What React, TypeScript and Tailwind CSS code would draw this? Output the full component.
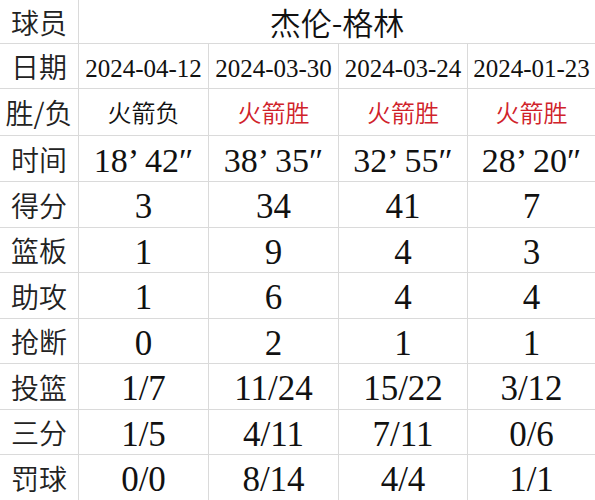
const games = [
  { date: '2024-04-12', result: '火箭负', win: false, time: '18’ 42″' },
  { date: '2024-03-30', result: '火箭胜', win: true, time: '38’ 35″' },
  { date: '2024-03-24', result: '火箭胜', win: true, time: '32’ 55″' },
  { date: '2024-01-23', result: '火箭胜', win: true, time: '28’ 20″' },
];

const stats: { label: string; values: string[] }[] = [
  { label: '得分', values: ['3', '34', '41', '7'] },
  { label: '篮板', values: ['1', '9', '4', '3'] },
  { label: '助攻', values: ['1', '6', '4', '4'] },
  { label: '抢断', values: ['0', '2', '1', '1'] },
  { label: '投篮', values: ['1/7', '11/24', '15/22', '3/12'] },
  { label: '三分', values: ['1/5', '4/11', '7/11', '0/6'] },
  { label: '罚球', values: ['0/0', '8/14', '4/4', '1/1'] },
];

const cjk = "font-['Noto_Sans_CJK_SC','Noto_Sans',sans-serif] font-[350]";
const serif = "font-['Liberation_Serif','Noto_Serif_CJK_SC',serif]";

const Label = ({ children }: { children: React.ReactNode }) => (
  <div className={`bg-white flex items-center justify-center leading-none text-[28px] text-[#222] ${cjk}`}>
    {children}
  </div>
);

const Cell = ({ children, className = '' }: { children: React.ReactNode; className?: string }) => (
  <div className={`bg-white flex items-center justify-center leading-none text-[#111] ${className}`}>
    {children}
  </div>
);

export default function App() {
  return (
    <div className="w-[595px] h-[500px] bg-white overflow-hidden">
      <div className="grid grid-cols-[78px_129px_129px_128px_127px] grid-rows-[43px_44px_46px_45px_45px_44px_45px_44px_45px_44px_45px] gap-px bg-[#dadada] w-[595px] h-[500px]">
        <Label>球员</Label>
        <div
          className={`col-span-4 bg-white flex items-center justify-center leading-none text-[31px] text-[#111] ${cjk}`}
        >
          杰伦-格林
        </div>

        <Label>日期</Label>
        {games.map((g) => (
          <Cell key={g.date} className={`text-[25px] pt-1 ${serif}`}>
            {g.date}
          </Cell>
        ))}

        <Label>胜/负</Label>
        {games.map((g) => (
          <Cell
            key={g.date}
            className={`text-[24px] ${cjk} ${g.win ? 'text-[#d0222a]' : 'text-[#111]'}`}
          >
            {g.result}
          </Cell>
        ))}

        <Label>时间</Label>
        {games.map((g) => (
          <Cell key={g.date} className={`text-[34px] pt-1 ${serif}`}>
            {g.time}
          </Cell>
        ))}

        {stats.map((s) => (
          <>
            <Label key={s.label}>{s.label}</Label>
            {s.values.map((v, i) => (
              <Cell key={s.label + i} className={`text-[35px] pt-1 ${serif}`}>
                {v}
              </Cell>
            ))}
          </>
        ))}
      </div>
    </div>
  );
}
